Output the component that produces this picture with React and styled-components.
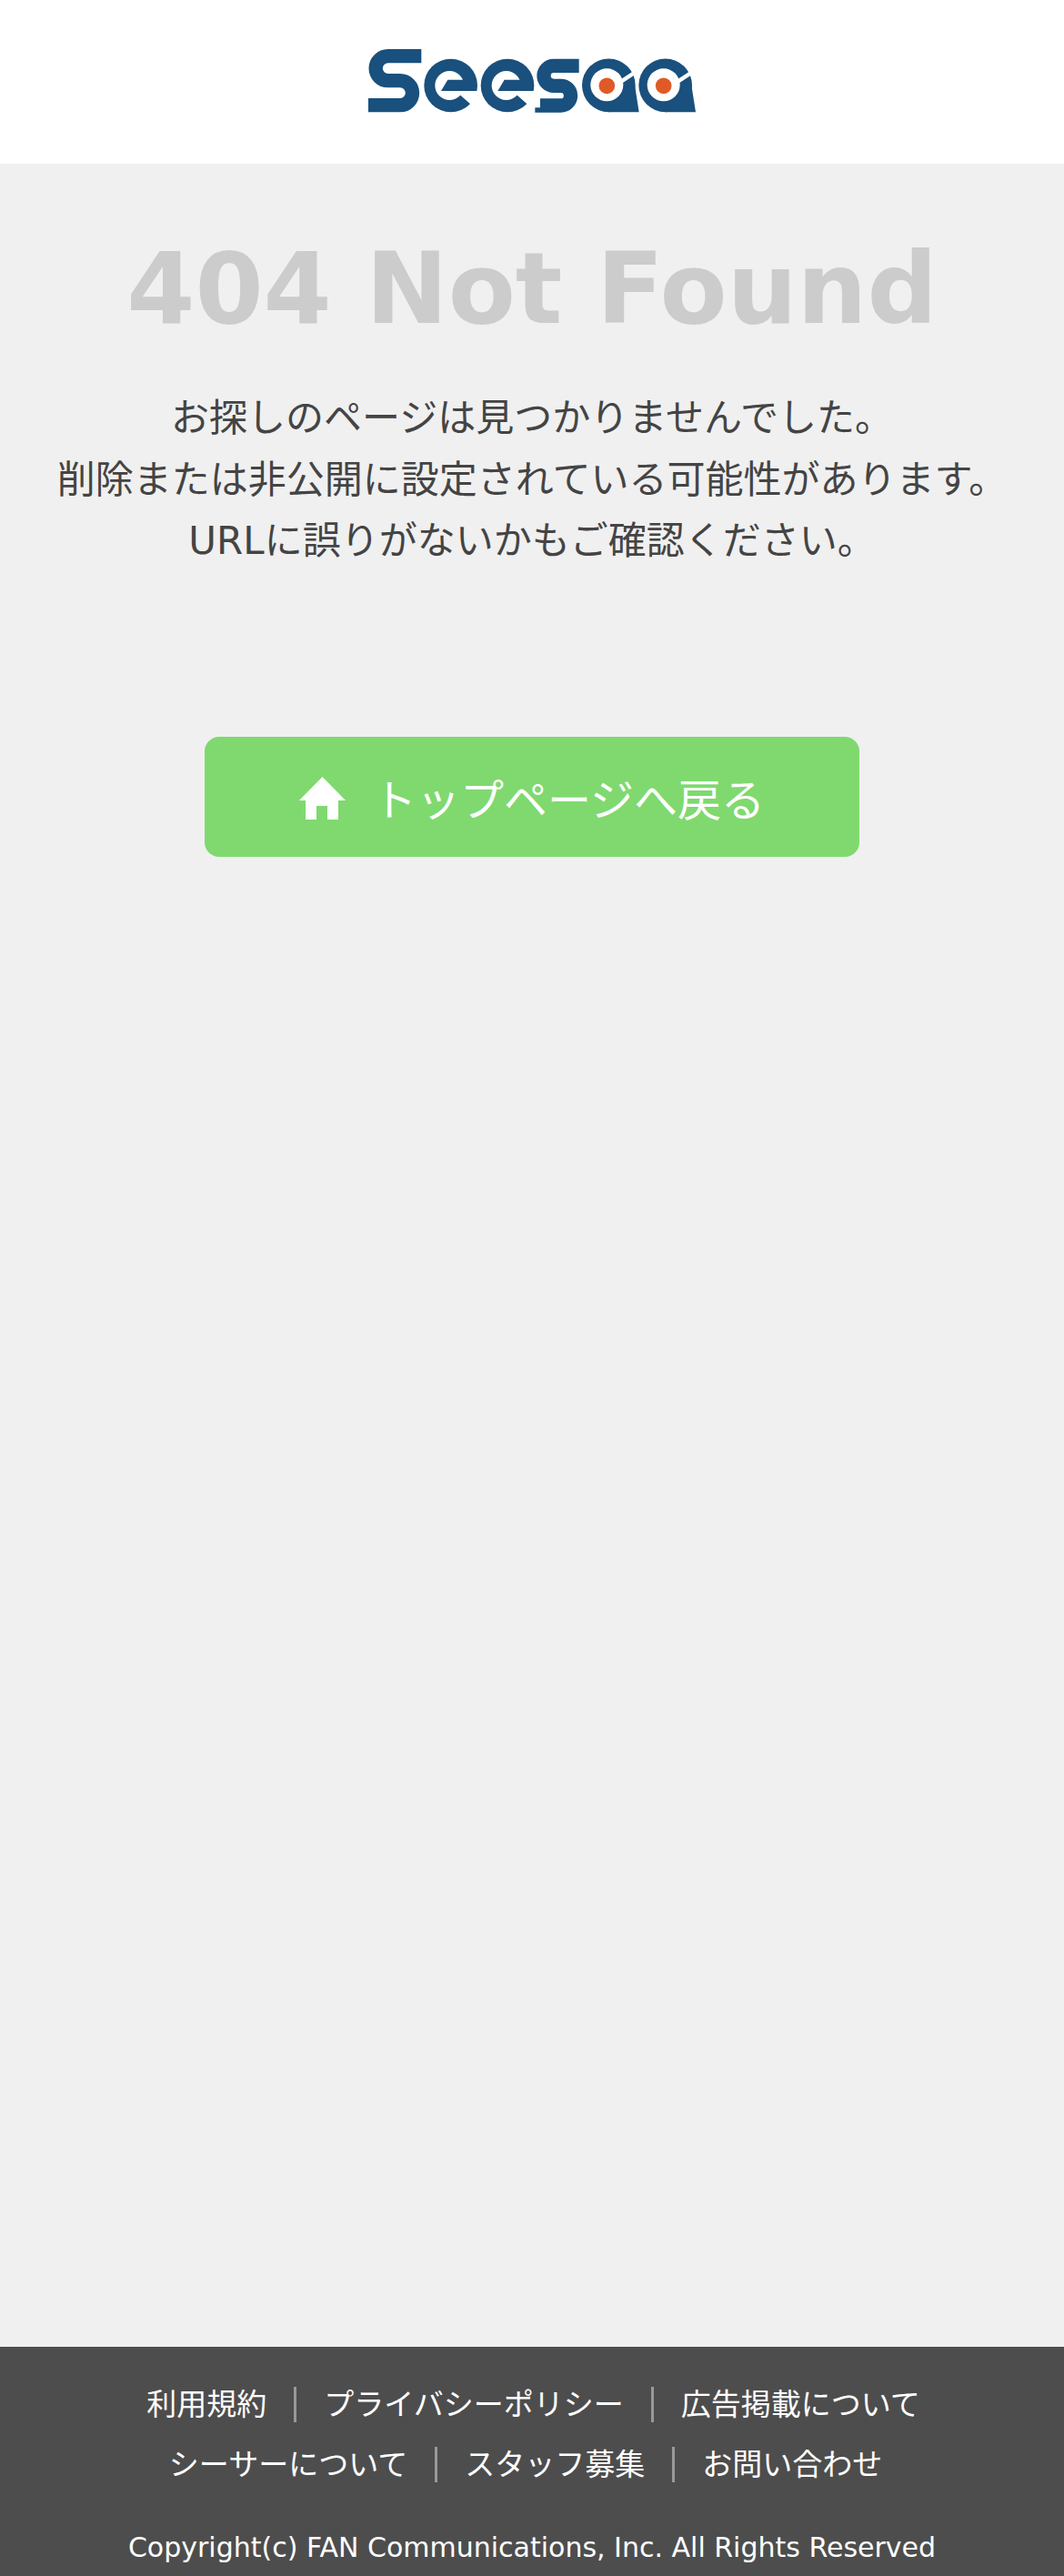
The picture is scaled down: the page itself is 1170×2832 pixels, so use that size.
import React from "react";
import styled, { createGlobalStyle } from "styled-components";

const Global = createGlobalStyle`
  html, body { margin: 0; padding: 0; background: #f0f0f0; }
  body { font-family: "DejaVu Sans", "Noto Sans CJK JP", sans-serif; }
`;
const Page = styled.div`
  display: flex; flex-direction: column; height: 2832px; overflow: hidden;
`;
const Header = styled.header`
  height: 180px; background: #fff; display: flex; align-items: center; justify-content: center; flex: none;
`;
const Main = styled.main`
  flex: 1; background: #f0f0f0; display: flex; flex-direction: column; align-items: center; padding-top: 73px;
`;
const Title = styled.h1`
  margin: 0; font-size: 108px; line-height: 130px; font-weight: 700; color: #cccccc; text-align: center;
`;
const Message = styled.p`
  margin: 43px 0 0; font-size: 42px; line-height: 67.6px; color: #444444; text-align: center; white-space: nowrap;
`;
const HomeButton = styled.a`
  margin-top: 181px; width: 720px; height: 132px; border-radius: 16px; background: #7fd96f; color: #fff;
  display: flex; align-items: center; justify-content: center; gap: 30px; font-size: 48px; text-decoration: none;
`;
const HomeGlyph = styled.svg`
  width: 51px; height: 47px; margin-top: 3px; fill: #fff; flex: none;
`;
const Footer = styled.footer`
  flex: none; height: 252px; background: #4d4d4d; color: #fff; display: flex; flex-direction: column; align-items: center; padding-top: 44px; box-sizing: border-box;
`;
const LinkRow = styled.ul`
  list-style: none; margin: 0 0 27px; padding: 0 ${(p) => p.$trail || 0}px 0 ${(p) => p.$lead || 0}px; display: flex; justify-content: center;
`;
const LinkItem = styled.li`
  font-size: 33px; line-height: 39px; padding: 0 30px; color: #fff;
  & + & { border-left: 3px solid #999999; }
`;
const Copyright = styled.div`
  margin-top: 25px; font-size: 30px; line-height: 40px; white-space: nowrap;
`;

const LetterE = ({ dx = 0 }) => (
  <g transform={`translate(${dx} 0)`}>
    <circle cx="332" cy="192" r="88" fill="#19507d" />
    <circle cx="328" cy="192" r="48" fill="#fff" />
    <path d="M300 210L322 173H385V210Z" fill="#19507d" />
    <path d="M340 210H440V265H410L365 225Z" fill="#fff" />
  </g>
);

const LetterA = ({ dx = 0 }) => (
  <g transform={`translate(${dx} 0)`}>
    <circle cx="853" cy="191.500" r="88" fill="#19507d" />
    <path d="M905 150L933 152L953 280H853V200Z" fill="#19507d" />
    <circle cx="847" cy="190" r="54" fill="#fff" />
    <path d="M885 185L965 132" stroke="#fff" strokeWidth="13" fill="none" />
    <circle cx="847" cy="193" r="26.500" fill="#e05a27" />
  </g>
);

const Logo = () => (
  <svg width="400" height="120" viewBox="0 0 1200 360" aria-label="Seesaa" role="img">
    <g fill="none" stroke="#19507d" strokeWidth="46">
      <path d="M235 95H125A40.500 40.500 0 0 0 125 176H165A40.500 40.500 0 0 1 165 257H60" />
      <path d="M755 127H672A33 33 0 0 0 672 193H695A32.500 32.500 0 0 1 695 258H610" />
    </g>
    <LetterE />
    <LetterE dx={187} />
    <LetterA />
    <LetterA dx={187} />
  </svg>
);

const HomeIcon = () => (
  <HomeGlyph viewBox="0 0 51 47">
    <path d="M25.500 0L51 26H43V47H31V32H19V47H7V26H0Z" />
  </HomeGlyph>
);

export default function App() {
  return (
    <Page>
      <Global />
      <Header><Logo /></Header>
      <Main>
        <Title>404 Not Found</Title>
        <Message>
          お探しのページは見つかりませんでした。<br />
          削除または非公開に設定されている可能性があります。<br />
          URLに誤りがないかもご確認ください。
        </Message>
        <HomeButton href="#"><HomeIcon />トップページへ戻る</HomeButton>
      </Main>
      <Footer>
        <LinkRow $lead={3}>
          <LinkItem>利用規約</LinkItem>
          <LinkItem>プライバシーポリシー</LinkItem>
          <LinkItem>広告掲載について</LinkItem>
        </LinkRow>
        <LinkRow $trail={14}>
          <LinkItem>シーサーについて</LinkItem>
          <LinkItem>スタッフ募集</LinkItem>
          <LinkItem>お問い合わせ</LinkItem>
        </LinkRow>
        <Copyright>Copyright(c) FAN Communications, Inc. All Rights Reserved</Copyright>
      </Footer>
    </Page>
  );
}
